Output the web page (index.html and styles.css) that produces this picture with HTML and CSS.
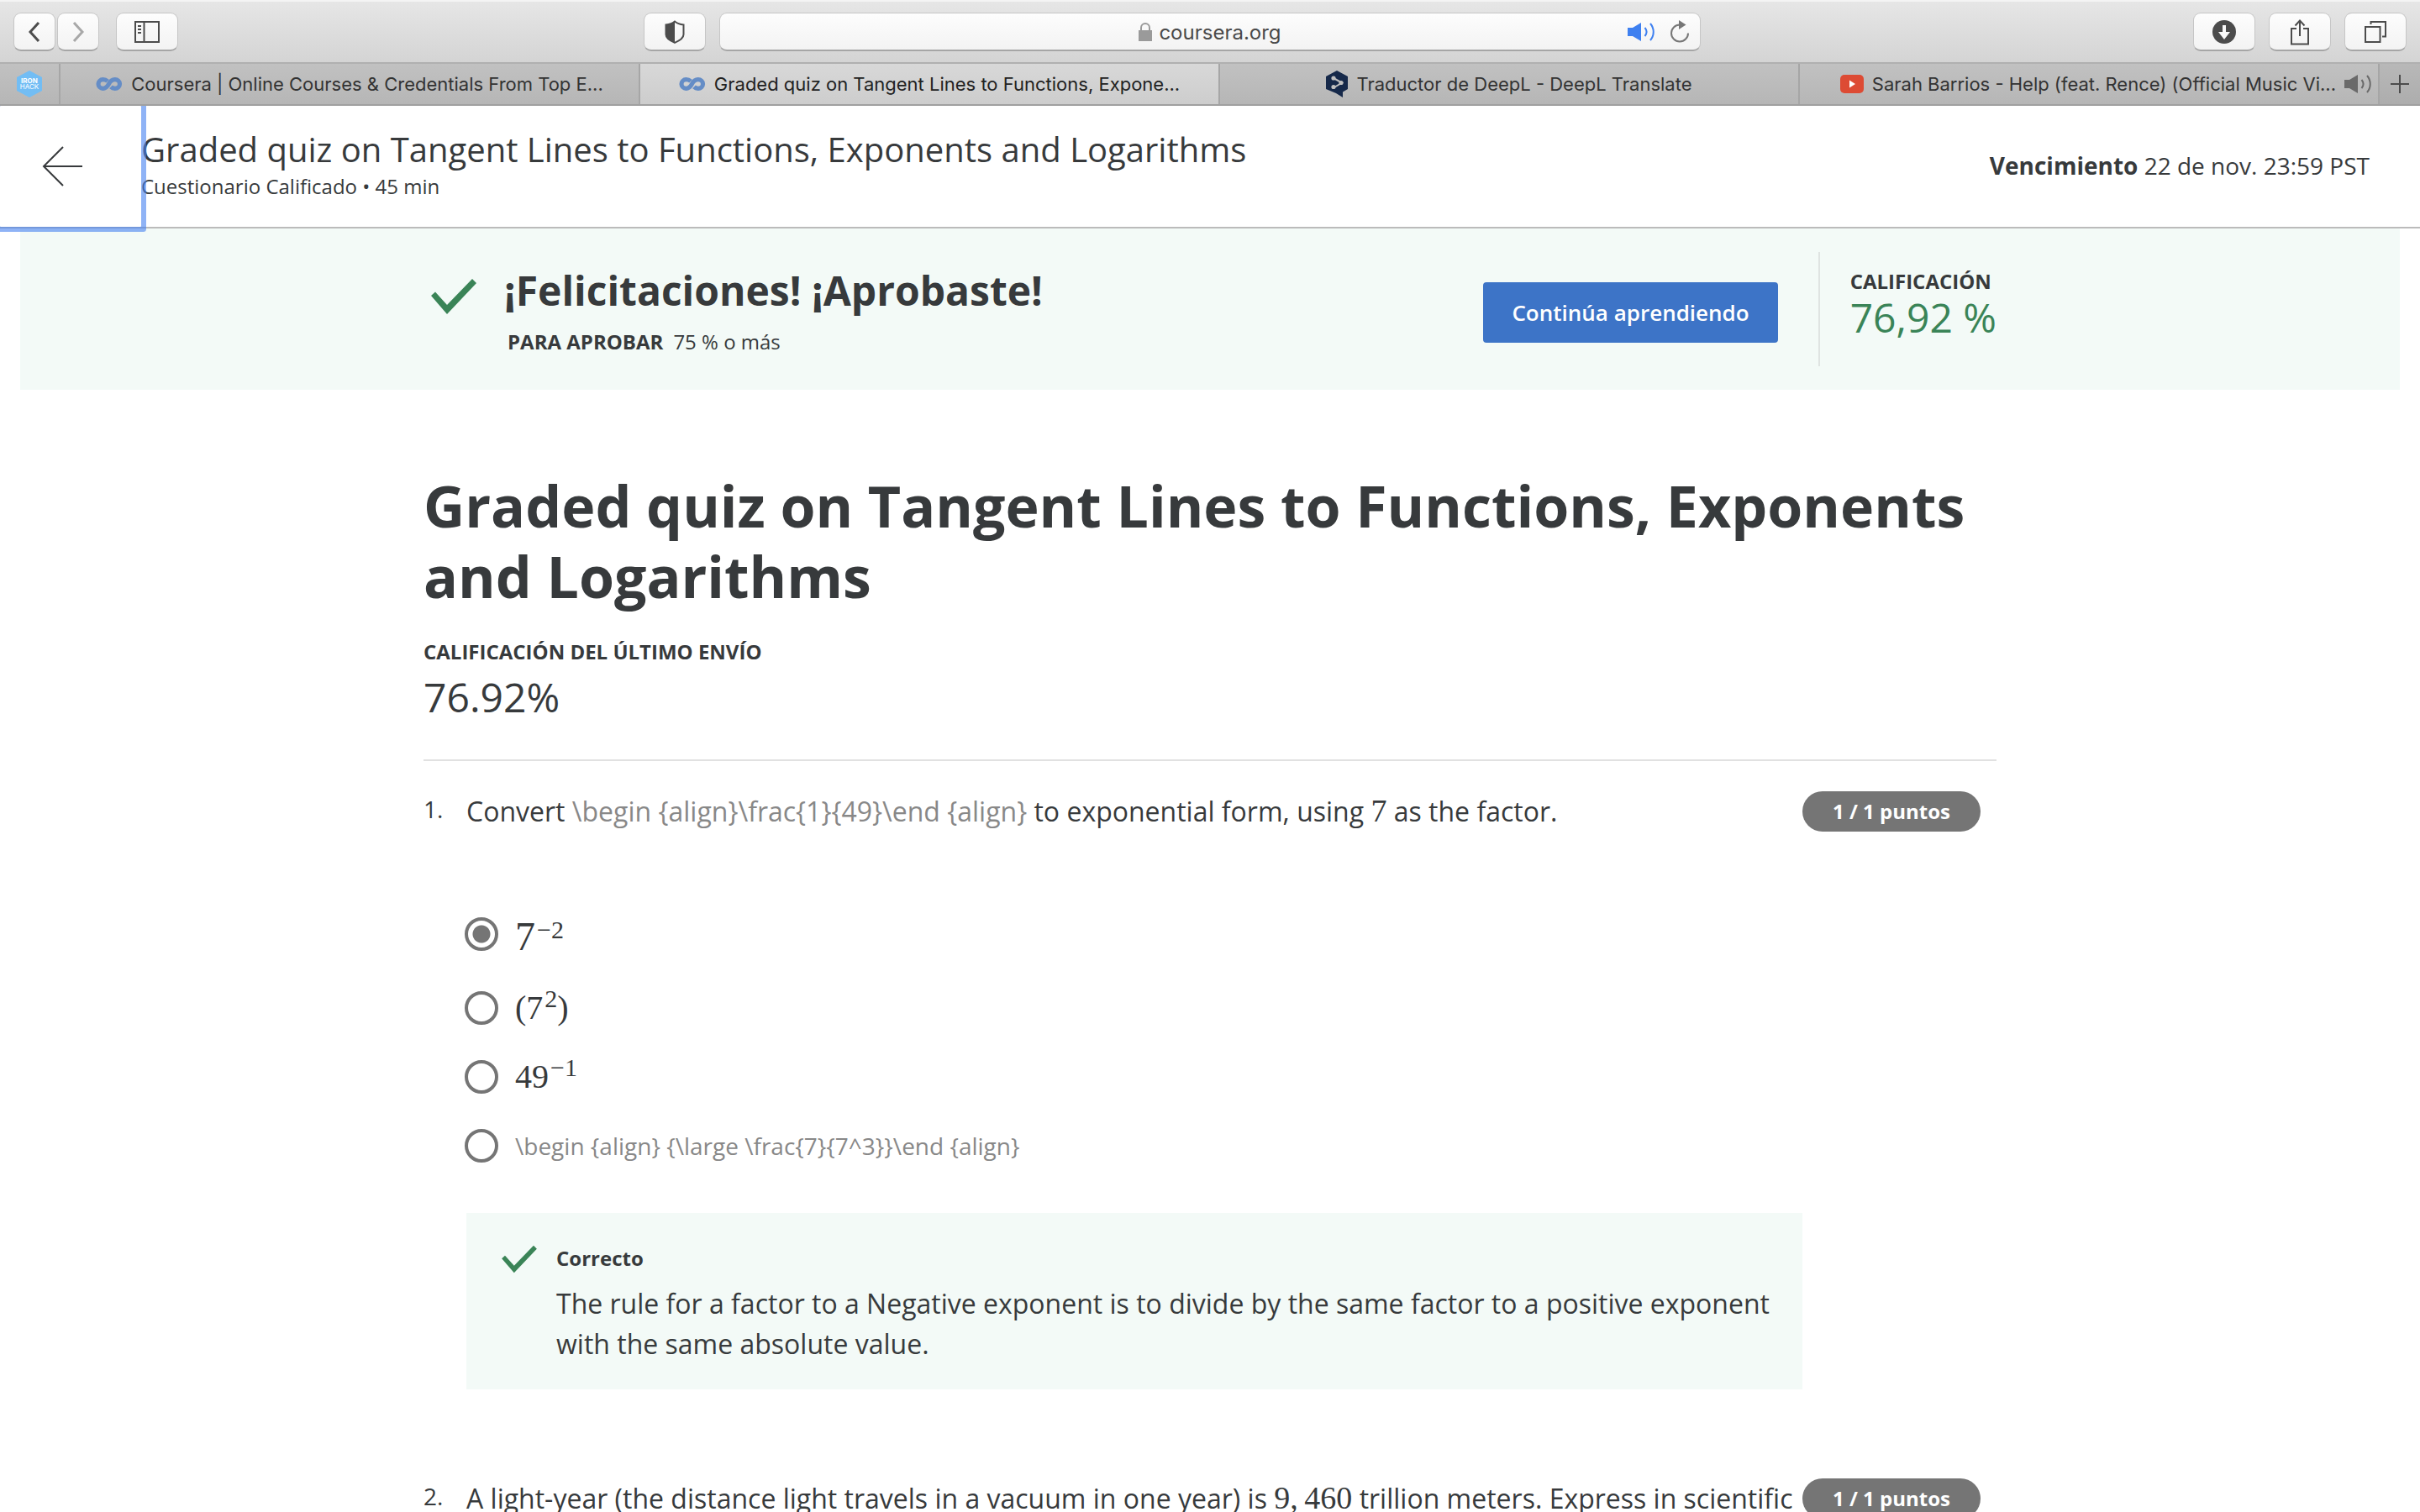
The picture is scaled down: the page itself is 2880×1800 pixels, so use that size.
FILE: index.html
```html
<!DOCTYPE html>
<html lang="es">
<head>
<meta charset="utf-8">
<meta name="viewport" content="width=device-width, initial-scale=1">
<title>Graded quiz on Tangent Lines to Functions, Exponents and Logarithms</title>
<link rel="stylesheet" href="styles.css">
</head>
<body>
<svg class="defs" aria-hidden="true">
  <symbol id="logo" viewBox="0 0 32 16">
    <path d="M14 4.6C12.600 3.400 10.600 2.700 8.500 2.700a5.500 5.300 0 0 0 0 10.600c3.600 0 5.300-2.300 6.800-5.100C16.800 5.300 19 2.700 22.800 2.700a5.700 5.300 0 0 1 0 10.600c-1.800 0-3.600-.7-4.800-1.900" fill="none" stroke="#658dc6" stroke-width="5.200"/>
  </symbol>
  <symbol id="check" viewBox="0 0 56 44">
    <path d="M1 21L6 16.500 20 32 50 1 55 6 20 43z" fill="#3a8457"/>
  </symbol>
  <symbol id="sound" viewBox="0 0 34 24">
    <path d="M0 7h6l10-6v22l-10-6H0z" fill="currentColor"/>
    <path d="M20.500 7c2.500 3 2.500 7 0 10M27 2c5 6 5 14 0 20" fill="none" stroke="currentColor" stroke-width="2"/>
  </symbol>
</svg>

<header class="browser">
  <div class="toolbar">
    <div class="tools">
      <div class="history">
        <button class="tool narrow" aria-label="Atrás"><svg width="14" height="26" viewBox="0 0 14 26"><path d="M12 2L2 13l10 11" fill="none" stroke="#4c4c4c" stroke-width="3"/></svg></button>
        <button class="tool narrow" aria-label="Adelante"><svg width="14" height="26" viewBox="0 0 14 26"><path d="M2 2l10 11L2 24" fill="none" stroke="#a8a8a8" stroke-width="3"/></svg></button>
      </div>
      <button class="tool" aria-label="Barra lateral"><svg width="30" height="26" viewBox="0 0 30 26"><path d="M1 1h28v24H1zM11.500 1v24" fill="none" stroke="#4c4c4c" stroke-width="2"/><path d="M4 6h4M4 10h4M4 14h4" stroke="#4c4c4c" stroke-width="2"/></svg></button>
      <button class="tool shield" aria-label="Informe de privacidad"><svg width="24" height="28" viewBox="0 0 24 28"><path d="M12 1.500c3 2.500 6 3.500 10.500 4V17c0 4.500-5 7.500-10.500 9.800C6.500 24.500 1.500 21.500 1.500 17V5.500C6 5 9 4 12 1.500z" fill="none" stroke="#4c4c4c" stroke-width="2"/><path d="M12 1v26C6 24.500 1 21.500 1 17V5.500C6 5 9 4 12 1z" fill="#4c4c4c"/></svg></button>
    </div>
    <div class="address">
      <svg width="16" height="22" viewBox="0 0 16 22"><path d="M0 9h16v13H0z" fill="#9a9a9a"/><path d="M3 10V6a5 5 0 0 1 10 0v4" fill="none" stroke="#9a9a9a" stroke-width="2"/></svg>
      <input class="url" type="text" value="coursera.org" aria-label="Dirección">
      <div class="address-actions">
        <button class="plain blue" aria-label="Silenciar"><svg width="34" height="24"><use href="#sound"/></svg></button>
        <button class="plain" aria-label="Recargar"><svg width="24" height="28" viewBox="0 0 24 28"><path d="M12 5.500A10 10 0 1 0 22 15.500" fill="none" stroke="#777" stroke-width="2"/><path d="M11 0l8.500 5.500L11 11z" fill="#777"/></svg></button>
      </div>
    </div>
    <div class="tools end">
      <button class="tool" aria-label="Descargas"><svg width="28" height="28" viewBox="0 0 28 28"><circle cx="14" cy="14" r="14" fill="#4c4c4c"/><path d="M12 6h4v8h5l-7 9-7-9h5z" fill="#fafafa"/></svg></button>
      <button class="tool" aria-label="Compartir"><svg width="24" height="32" viewBox="0 0 24 32"><path d="M8 12H2v18.500h20V12h-6M12 21V3M6.500 8.500L12 2.500l5.500 6" fill="none" stroke="#4c4c4c" stroke-width="2"/></svg></button>
      <button class="tool" aria-label="Pestañas"><svg width="26" height="26" viewBox="0 0 26 26"><path d="M1 7h17.500v18H1z" fill="none" stroke="#4c4c4c" stroke-width="2"/><path d="M7.500 4V1H25v17.500h-4" fill="none" stroke="#4c4c4c" stroke-width="2"/></svg></button>
    </div>
  </div>
  <nav class="tabs" aria-label="Pestañas abiertas">
    <a class="pinned" href="#" aria-label="Ironhack"><svg width="30" height="32" viewBox="0 0 30 32"><path d="M15 0l15 8v16l-15 8L0 24V8z" fill="#72bdf4"/><text x="15" y="15" class="iron heavy">IRON</text><text x="15" y="22" class="iron">HACK</text></svg></a>
    <a class="tab" href="#"><svg width="32" height="16"><use href="#logo"/></svg><span>Coursera | Online Courses &amp; Credentials From Top E...</span></a>
    <a class="tab current" href="#" aria-current="page"><svg width="32" height="16"><use href="#logo"/></svg><span>Graded quiz on Tangent Lines to Functions, Expone...</span></a>
    <a class="tab" href="#"><svg width="26" height="32" viewBox="0 0 26 32"><path d="M13 0l13 7v15l-6 3.500V32l-8-5L0 22V7z" fill="#16294a"/><path d="M9 9l10 5.500L9 20.500" fill="none" stroke="#c0c0c0" stroke-width="2"/><circle cx="9" cy="9" r="2.600" fill="#c0c0c0"/><circle cx="18" cy="14.500" r="2.600" fill="#c0c0c0"/><circle cx="9" cy="19.500" r="2.600" fill="#c0c0c0"/></svg><span>Traductor de DeepL - DeepL Translate</span></a>
    <a class="tab playing" href="#"><svg width="28" height="22" viewBox="0 0 28 22"><rect width="28" height="22" rx="5" fill="#dd4b34"/><path d="M11 6.500v9l7-4.500z" fill="#fff"/></svg><span>Sarah Barrios - Help (feat. Rence) (Official Music Vi...</span><svg class="audio" width="34" height="24"><use href="#sound"/></svg></a>
    <button class="new-tab" aria-label="Nueva pestaña"><svg width="22" height="22" viewBox="0 0 22 22"><path d="M11 0v22M0 11h22" stroke="#4c4c4c" stroke-width="2"/></svg></button>
  </nav>
</header>

<div class="page">
  <header class="quiz-header">
    <button class="back" aria-label="Volver"><svg width="48" height="48" viewBox="0 0 48 48"><path d="M25 1L2 24l23 23M2 24h46" fill="none" stroke="#373a3c" stroke-width="2"/></svg></button>
    <div class="quiz-name">
      <div class="name">Graded quiz on Tangent Lines to Functions, Exponents and Logarithms</div>
      <div class="kind">Cuestionario Calificado • 45 min</div>
    </div>
    <div class="due"><b>Vencimiento</b> 22 de nov. 23:59 PST</div>
  </header>

  <section class="banner">
    <div class="banner-inner">
      <svg class="banner-check" width="56" height="44"><use href="#check"/></svg>
      <div class="result">
        <h2>¡Felicitaciones! ¡Aprobaste!</h2>
        <p><b>PARA APROBAR</b><span>75 % o más</span></p>
      </div>
      <button class="continue">Continúa aprendiendo</button>
      <div class="grade">
        <div class="label">CALIFICACIÓN</div>
        <div class="grade-value">76,92 %</div>
      </div>
    </div>
  </section>

  <main class="quiz">
    <h1>Graded quiz on Tangent Lines to Functions, Exponents and Logarithms</h1>
    <div class="label">CALIFICACIÓN DEL ÚLTIMO ENVÍO</div>
    <div class="last-grade">76.92%</div>

    <section class="question">
      <div class="number">1.</div>
      <div class="body">
        <p class="prompt" id="q1">Convert <span class="raw">\begin {align}\frac{1}{49}\end {align}</span> to exponential form, using <span class="math">7</span> as the factor.</p>
        <div class="options" role="radiogroup" aria-labelledby="q1">
          <label class="option large"><input type="radio" name="q1" checked><span class="math">7<sup>−2</sup></span></label>
          <label class="option"><input type="radio" name="q1"><span class="math">(7<sup>2</sup>)</span></label>
          <label class="option"><input type="radio" name="q1"><span class="math">49<sup>−1</sup></span></label>
          <label class="option"><input type="radio" name="q1"><span class="raw">\begin {align} {\large \frac{7}{7^3}}\end {align}</span></label>
        </div>
        <div class="feedback">
          <svg width="44" height="34"><use href="#check"/></svg>
          <div>
            <div class="label">Correcto</div>
            <p>The rule for a factor to a Negative exponent is to divide by the same factor to a positive exponent with the same absolute value.</p>
          </div>
        </div>
      </div>
      <div class="points">1 / 1 puntos</div>
    </section>

    <section class="question">
      <div class="number">2.</div>
      <div class="body">
        <p class="prompt">A light-year (the distance light travels in a vacuum in one year) is <span class="math">9,&thinsp;460</span> trillion meters. Express in scientific notation.</p>
      </div>
      <div class="points">1 / 1 puntos</div>
    </section>
  </main>
</div>
</body>
</html>
```

FILE: styles.css
```css
* { box-sizing: border-box; }
body {
  margin: 0;
  height: 100vh;
  display: flex;
  flex-direction: column;
  overflow: hidden;
  background: #fff;
  color: #373a3c;
  font-family: "Open Sans", sans-serif;
}
h1, h2, p { margin: 0; }
button { font: inherit; cursor: pointer; }
svg { display: block; flex: none; }
.defs { position: absolute; width: 0; height: 0; }

/* Browser chrome */
.browser { flex: none; font-family: Inter, sans-serif; }
.toolbar {
  height: 76px;
  display: grid;
  grid-template-columns: 1fr minmax(0, 1168px) 1fr;
  align-items: center;
  padding: 0 16px;
  border-top: 2px solid #f4f4f4;
  border-bottom: 2px solid #b0b0b0;
  background: linear-gradient(#e6e6e6, #d4d4d4);
}
.tools { display: flex; gap: 16px; }
.tools.end { justify-content: flex-end; }
.history { display: flex; gap: 2px; margin-right: 4px; }
.tool {
  width: 74px;
  height: 46px;
  display: flex;
  align-items: center;
  justify-content: center;
  padding: 0;
  border: 1px solid #c6c6c6;
  border-bottom: 2px solid #a6a6a6;
  border-radius: 9px;
  background: linear-gradient(#fdfdfd, #f3f3f3);
}
.tool.narrow { width: 50px; }
.shield { margin-left: auto; margin-right: 16px; }
.address {
  height: 46px;
  display: flex;
  align-items: center;
  justify-content: center;
  gap: 8px;
  position: relative;
  border: 1px solid #c6c6c6;
  border-bottom: 2px solid #a6a6a6;
  border-radius: 9px;
  background: linear-gradient(#fdfdfd, #f3f3f3);
}
.url {
  field-sizing: content;
  padding: 3px 0 0;
  border: 0;
  background: none;
  color: #4a4a4a;
  font: 24px/32px Inter, sans-serif;
}
.address-actions {
  position: absolute;
  right: 12px;
  display: flex;
  align-items: center;
  gap: 16px;
}
.plain { padding: 0; border: 0; background: none; }
.blue { color: #3f80f0; }
.tabs {
  height: 50px;
  display: flex;
  border-bottom: 2px solid #a0a0a0;
  background: linear-gradient(#c1c1c1, #b6b6b6);
}
.pinned, .tab, .new-tab {
  display: flex;
  align-items: center;
  justify-content: center;
}
.pinned { flex: none; width: 72px; border-right: 2px solid #a6a6a6; }
.iron { font: 8px Inter, sans-serif; text-anchor: middle; fill: #fff; }
.heavy { font-weight: 700; }
.tab {
  flex: 1;
  min-width: 0;
  gap: 10px;
  border-right: 2px solid #a6a6a6;
  color: #333;
  font-size: 22px;
  line-height: 32px;
  text-decoration: none;
  white-space: nowrap;
}
.tab.current { background: linear-gradient(#d8d8d8, #cdcdcd); color: #222; }
.tab.playing { justify-content: flex-end; }
.audio { margin: 0 6px 0 0; color: #6a6a6a; }
.new-tab {
  flex: none;
  width: 48px;
  padding: 0;
  border: 0;
  background: linear-gradient(#b8b8b8, #adadad);
}

/* Quiz header */
.page { flex: 1; min-height: 0; overflow: hidden; }
.quiz-header {
  height: 146px;
  display: flex;
  align-items: center;
  padding-right: 60px;
  border-bottom: 2px solid #bbb;
}
.back {
  width: 168px;
  height: 144px;
  display: flex;
  align-items: center;
  padding: 0 0 0 50px;
  border: 0;
  border-radius: 1px;
  background: none;
  position: relative;
  z-index: 1;
  box-shadow: 0 0 0 6px rgba(68, 128, 240, .6);
}
.quiz-name { padding-bottom: 8px; }
.name { font-size: 40px; line-height: 56px; }
.kind { font-size: 24px; line-height: 32px; }
.due { margin-left: auto; padding-bottom: 2px; font-size: 28px; line-height: 40px; }

/* Result banner */
.banner { margin: 0 24px; padding: 28px 24px; background: #f3faf7; }
.banner-inner {
  max-width: 1872px;
  margin: 0 auto;
  display: flex;
  align-items: center;
}
.banner-check { margin: 0 32px 30px 8px; }
.result h2 { font-size: 48px; line-height: 66px; }
.result p {
  display: flex;
  gap: 12px;
  margin-top: 12px;
  padding-left: 4px;
  font-size: 24px;
  line-height: 32px;
}
.continue {
  height: 72px;
  margin: 8px 48px 0 auto;
  padding: 0 34px;
  border: 0;
  border-radius: 4px;
  background: #3d74c7;
  color: #fff;
  font-size: 26px;
  font-weight: 600;
}
.grade {
  height: 136px;
  padding: 19px 0 0 36px;
  border-left: 2px solid #dfe4e2;
}
.label { font-size: 24px; line-height: 32px; font-weight: 700; }
.grade-value { font-size: 48px; line-height: 54px; color: #3a8457; }

/* Quiz */
.quiz { max-width: 1920px; margin: 0 auto; padding: 96px 24px; }
h1 { margin-bottom: 32px; font-size: 68px; line-height: 84px; }
.last-grade {
  padding: 6px 0 42px;
  border-bottom: 2px solid #e1e1e1;
  font-size: 48px;
  line-height: 64px;
}
.question { display: flex; align-items: flex-start; padding-top: 36px; }
.question + .question { padding-top: 106px; }
.number { width: 51px; font-size: 28px; line-height: 42px; }
.body { flex: 1; min-width: 0; font-size: 32px; line-height: 48px; }
.raw { color: #888; }
.math { font-family: "Liberation Serif", serif; font-size: 40px; line-height: 40px; }
.prompt .math { font-size: 38px; }
.math sup { margin-left: 2px; font-size: 30px; line-height: 0; vertical-align: 14px; }
.options {
  display: flex;
  flex-direction: column;
  gap: 42px;
  margin-left: -2px;
  padding: 102px 0 60px;
}
.option {
  display: flex;
  align-items: flex-start;
  gap: 20px;
  font-size: 28px;
  line-height: 40px;
}
.option.large .math { font-size: 48px; line-height: 46px; }
.option input {
  appearance: none;
  flex: none;
  width: 40px;
  height: 40px;
  margin: 0;
  border: 4px solid #757575;
  border-radius: 50%;
}
.option input:checked { background: radial-gradient(circle, #757575 10px, transparent 11px); }
.feedback {
  display: flex;
  gap: 22px;
  padding: 38px 24px 30px 41px;
  background: #f3faf7;
}
.feedback p { margin-top: 14px; }
.points {
  width: 212px;
  margin-right: 19px;
  border-radius: 24px;
  background: #757575;
  color: #fff;
  font-size: 24px;
  font-weight: 700;
  line-height: 48px;
  text-align: center;
}
```
